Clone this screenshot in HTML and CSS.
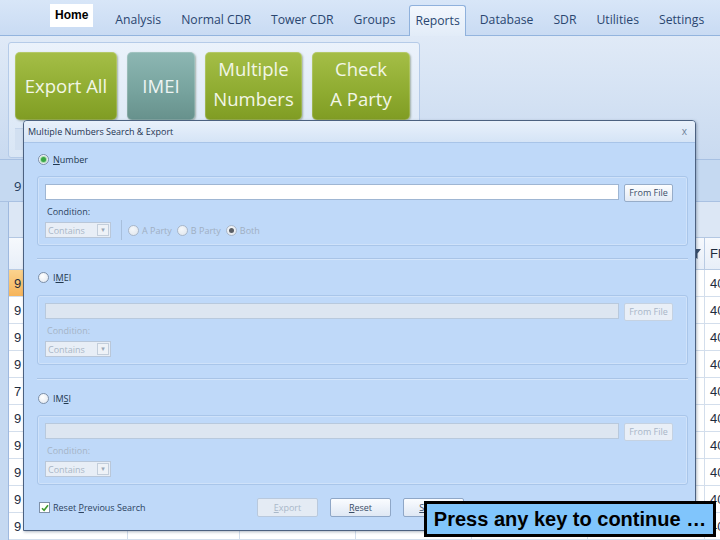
FILE: index.html
```html
<!DOCTYPE html>
<html>
<head>
<meta charset="utf-8">
<link rel="stylesheet" href="styles.css">
</head>
<body>
<div class="tabbar">
  <div class="tab home">Home</div>
  <div class="tab first">Analysis</div>
  <div class="tab">Normal CDR</div>
  <div class="tab">Tower CDR</div>
  <div class="tab">Groups</div>
  <div class="tab active">Reports</div>
  <div class="tab">Database</div>
  <div class="tab">SDR</div>
  <div class="tab">Utilities</div>
  <div class="tab">Settings</div>
</div>
<div class="ribbon">
  <div class="panel">
    <div class="bigrow">
      <div class="big green w1">Export All</div>
      <div class="big teal w2">IMEI</div>
      <div class="big green w3 two">Multiple<br>Numbers</div>
      <div class="big green w4 two">Check<br>A Party</div>
    </div>
    <div class="panel-foot"></div>
  </div>
</div>
<div class="infobar">9</div>
<div class="grid">
  <div class="band"></div>
  <div class="row head">
    <div class="cell"></div><div class="cell"></div><div class="cell"></div><div class="cell"></div><div class="cell"></div>
    <div class="cell filt"><svg width="9" height="10" viewBox="0 0 9 10"><path d="M0 0H9L5.5 4.5V10L3.5 8.5V4.5Z" fill="#3b4f6c"/></svg></div>
    <div class="cell">Fl</div>
  </div>
  <div class="row"><div class="cell sel">9</div><div class="cell"></div><div class="cell"></div><div class="cell"></div><div class="cell"></div><div class="cell"></div><div class="cell">40</div></div>
  <div class="row"><div class="cell">9</div><div class="cell"></div><div class="cell"></div><div class="cell"></div><div class="cell"></div><div class="cell"></div><div class="cell">40</div></div>
  <div class="row"><div class="cell">9</div><div class="cell"></div><div class="cell"></div><div class="cell"></div><div class="cell"></div><div class="cell"></div><div class="cell">40</div></div>
  <div class="row"><div class="cell">9</div><div class="cell"></div><div class="cell"></div><div class="cell"></div><div class="cell"></div><div class="cell"></div><div class="cell">40</div></div>
  <div class="row"><div class="cell">7</div><div class="cell"></div><div class="cell"></div><div class="cell"></div><div class="cell"></div><div class="cell"></div><div class="cell">40</div></div>
  <div class="row"><div class="cell">9</div><div class="cell"></div><div class="cell"></div><div class="cell"></div><div class="cell"></div><div class="cell"></div><div class="cell">40</div></div>
  <div class="row"><div class="cell">9</div><div class="cell"></div><div class="cell"></div><div class="cell"></div><div class="cell"></div><div class="cell"></div><div class="cell">40</div></div>
  <div class="row"><div class="cell">9</div><div class="cell"></div><div class="cell"></div><div class="cell"></div><div class="cell"></div><div class="cell"></div><div class="cell">40</div></div>
  <div class="row"><div class="cell">9</div><div class="cell"></div><div class="cell"></div><div class="cell"></div><div class="cell"></div><div class="cell"></div><div class="cell">40</div></div>
  <div class="row"><div class="cell">9</div><div class="cell"></div><div class="cell"></div><div class="cell"></div><div class="cell"></div><div class="cell"></div><div class="cell">40</div></div>
  <div class="row"><div class="cell">9</div><div class="cell"></div><div class="cell"></div><div class="cell"></div><div class="cell"></div><div class="cell"></div><div class="cell">40</div></div>
</div>

<div class="dialog">
  <div class="dtitle"><span>Multiple Numbers Search &amp; Export</span><span class="close">x</span></div>
  <div class="dbody">
    <div class="opt"><span class="radio on"></span><span class="lbl"><u>N</u>umber</span></div>
    <div class="group g1">
      <div class="inrow"><div class="input"></div><div class="fbtn">From File</div></div>
      <div class="cond">Condition:</div>
      <div class="crow">
        <div class="combo"><span>Contains</span><span class="drop">&#9662;</span></div>
        <div class="vsep"></div>
        <span class="radio dis"></span><span class="rl">A Party</span>
        <span class="radio dis"></span><span class="rl">B Party</span>
        <span class="radio dis chk"></span><span class="rl">Both</span>
      </div>
    </div>
    <div class="sep s1"></div>
    <div class="opt o2"><span class="radio"></span><span class="lbl">I<u>M</u>EI</span></div>
    <div class="group g2 off">
      <div class="inrow"><div class="input"></div><div class="fbtn">From File</div></div>
      <div class="cond">Condition:</div>
      <div class="crow"><div class="combo"><span>Contains</span><span class="drop">&#9662;</span></div></div>
    </div>
    <div class="sep s2"></div>
    <div class="opt o3"><span class="radio"></span><span class="lbl">IM<u>S</u>I</span></div>
    <div class="group g3 off">
      <div class="inrow"><div class="input"></div><div class="fbtn">From File</div></div>
      <div class="cond">Condition:</div>
      <div class="crow"><div class="combo"><span>Contains</span><span class="drop">&#9662;</span></div></div>
    </div>
    <div class="bottom">
      <div class="chkwrap">
        <span class="checkbox"><svg width="8" height="8" viewBox="0 0 8 8"><path d="M1 4.2L3.1 6.3L7 1.3" fill="none" stroke="#3f9a2f" stroke-width="1.6"/></svg></span>
        <span class="lbl">Reset <u>P</u>revious Search</span>
      </div>
      <div class="btn dis"><u>E</u>xport</div>
      <div class="btn"><u>R</u>eset</div>
      <div class="btn"><u>S</u>earch</div>
    </div>
  </div>
</div>

<div class="press">Press any key to continue …</div>
</body>
</html>
```
FILE: styles.css
```css
* { box-sizing: border-box; }
html, body { margin: 0; padding: 0; }
body {
  width: 720px;
  height: 540px;
  overflow: hidden;
  position: relative;
  font-family: "Open Sans", "DejaVu Sans", sans-serif;
  background: #c5d9f1;
}

/* tabs */
.tabbar {
  height: 36px;
  display: flex;
  align-items: flex-start;
  padding-left: 50px;
  background: linear-gradient(#d8e6f8, #c9dbf3);
  border-bottom: 1px solid #93b4de;
}
.tab {
  margin-top: 5px;
  height: 30px;
  line-height: 30px;
  padding: 0 10px;
  font-size: 12.2px;
  color: #2a4670;
  white-space: nowrap;
}
.tab.home {
  margin-top: 4px;
  height: 23px;
  line-height: 23px;
  padding: 0 5px;
  background: #fff;
  color: #000;
  font-family: "Liberation Sans", Arial, sans-serif;
  font-weight: bold;
  font-size: 12px;
}
.tab.first { margin-left: 12px; }
.tab.active {
  margin: 5px 4px 0 4px;
  padding: 0 5px;
  height: 31px;
  line-height: 29px;
  border: 1px solid #8fb1dc;
  border-bottom: none;
  border-radius: 3px 3px 0 0;
  background: linear-gradient(#f3f7fd, #e2ecf8);
}

/* ribbon */
.ribbon {
  height: 124px;
  background: linear-gradient(#e0eaf7, #d3e1f3 55%, #c9daf0);
  border-bottom: 1px solid #a7c0e2;
  padding: 6px 0 0 8px;
}
.panel {
  width: 412px;
  height: 116px;
  border: 1px solid #b5cbe8;
  border-radius: 3px;
  background: linear-gradient(#ebf2fb, #d9e6f5);
  padding: 9px 0 0 6px;
}
.bigrow { display: flex; gap: 10px; }
.big {
  height: 68px;
  border-radius: 5px;
  display: flex;
  align-items: center;
  justify-content: center;
  text-align: center;
  font-size: 18.5px;
  line-height: 30px;
  color: #f2f6e6;
  box-shadow: 1px 1px 2px rgba(40, 60, 20, 0.35), inset 0 0 0 1px rgba(255,255,255,0.18);
}
.big.two { padding-bottom: 4px; }
.green { background: linear-gradient(#a5be47, #8eab30 60%, #809c23); }
.teal { background: linear-gradient(#8db7b3, #76a29d 60%, #67918c); color: #eef4f3; }
.w1 { width: 102px; }
.w2 { width: 68px; }
.w3 { width: 97px; }
.w4 { width: 98px; }
.panel-foot {
  margin-top: 8px;
  height: 22px;
  background: #d2e0f1;
  border-top: 1px solid #c3d4ea;
}

.infobar {
  height: 42px;
  padding: 17px 0 0 14px;
  font-size: 13px;
  line-height: 18px;
  color: #1e395b;
  border-bottom: 1px solid #a9c1e2;
}

/* grid */
.grid {
  margin-left: 8px;
  border-left: 1px solid #9fb9de;
  background: #fff;
  font-family: "Liberation Sans", Arial, sans-serif;
  font-size: 13px;
  color: #1e2c3e;
}
.band { height: 36px; background: #dce7f5; border-bottom: 1px solid #b3c7e2; }
.row {
  display: grid;
  grid-template-columns: 119px 112px 116px 116px 116px 117px 60px;
  height: 27px;
}
.row.head { height: 32px; background: linear-gradient(#f6f9fd, #e7eef8); }
.cell {
  border-right: 1px solid #d3deec;
  border-bottom: 1px solid #d3deec;
  padding-left: 5px;
  line-height: 28px;
  white-space: nowrap;
  overflow: hidden;
}
.row.head .cell { border-color: #b9cbe3; line-height: 31px; }
.cell.filt { display: flex; justify-content: flex-end; align-items: center; padding-right: 3px; }
.cell.sel { background: linear-gradient(#fbd38e, #f6b45a); }

/* dialog */
.dialog {
  position: absolute;
  left: 23px;
  top: 120px;
  width: 673px;
  height: 411px;
  border: 1px solid #4c6180;
  border-radius: 4px 4px 0 0;
  background: #bfd9f9;
  box-shadow: 1px 1px 3px rgba(30, 50, 80, 0.35);
  font-size: 9px;
  color: #22384f;
}
.dtitle {
  height: 22px;
  line-height: 21px;
  padding: 0 8px 0 4px;
  display: flex;
  justify-content: space-between;
  background: linear-gradient(#e9f1fb, #d5e4f6);
  border-bottom: 1px solid #a8c4e8;
  border-radius: 3px 3px 0 0;
  color: #1f3552;
}
.close { color: #6f829b; font-size: 10px; }
.dbody { padding: 10px 7px 0 13px; }
.opt { display: flex; align-items: center; height: 12px; padding-left: 1px; }
.opt .lbl { margin-left: 4px; }
.o2 { margin-top: 12px; }
.o3 { margin-top: 13px; }
.radio {
  display: inline-block;
  width: 11px;
  height: 11px;
  flex: none;
  border-radius: 50%;
  border: 1px solid #7e90a8;
  background: radial-gradient(circle at 40% 35%, #ffffff, #dfe6ef);
  position: relative;
}
.radio.on::after {
  content: "";
  position: absolute;
  left: 2px; top: 2px;
  width: 5px; height: 5px;
  border-radius: 50%;
  background: #3aa646;
  box-shadow: 0 0 0 1px #a8dcae;
}
.radio.dis { border-color: #a9b7c9; background: radial-gradient(circle at 40% 35%, #f4f7fa, #dfe5ec); }
.radio.chk::after {
  content: "";
  position: absolute;
  left: 2px; top: 2px;
  width: 5px; height: 5px;
  border-radius: 50%;
  background: #5a5f66;
}

.group {
  height: 70px;
  margin-top: 11px;
  border: 1px solid #a9c6ea;
  border-radius: 3px;
  box-shadow: inset 0 0 0 1px #cfe2fa;
  padding: 7px 14px 7px 7px;
}
.g2 { margin-top: 12px; }
.inrow { display: flex; gap: 5px; height: 18px; }
.input {
  flex: 1;
  height: 16px;
  background: #fff;
  border: 1px solid #9fb6d3;
}
.fbtn {
  width: 49px;
  height: 18px;
  border: 1px solid #97adc9;
  border-radius: 2px;
  background: linear-gradient(#fdfeff, #e2eaf5);
  text-align: center;
  line-height: 16px;
  color: #3a4e69;
}
.cond { margin-top: 4px; height: 12px; line-height: 12px; padding-left: 2px; color: #2c4361; }
.crow { margin-top: 4px; display: flex; align-items: center; height: 16px; }
.combo {
  width: 66px;
  height: 16px;
  border: 1px solid #b9c7d9;
  background: #e8eef6;
  color: #a9b6c6;
  display: flex;
  justify-content: space-between;
  align-items: center;
  padding: 0 1px 0 2px;
}
.drop {
  width: 12px;
  height: 12px;
  border: 1px solid #c3cedb;
  background: #eef2f7;
  font-size: 7px;
  line-height: 10px;
  text-align: center;
  color: #9aa8b8;
}
.vsep { width: 1px; height: 20px; background: #a7bfdc; margin: 0 6px 0 10px; }
.rl { color: #9fafc2; margin: 0 5px 0 3px; }

.off .input { background: #dde6f1; border-color: #b8c9dd; }
.off .fbtn { background: #e9eff7; border-color: #c5d2e2; color: #a8b6c7; }
.off .cond { color: #a5b4c6; }

.sep { height: 1px; background: #a9c4e6; box-shadow: 0 1px 0 #d5e6fb; }
.s1 { margin-top: 12px; }
.s2 { margin-top: 13px; }

.bottom { margin-top: 13px; display: flex; align-items: center; height: 19px; }
.chkwrap { width: 220px; display: flex; align-items: center; padding-left: 2px; }
.checkbox {
  width: 11px; height: 11px;
  border: 1px solid #7e90a8;
  background: #fff;
  display: flex;
  align-items: center;
  justify-content: center;
}
.chkwrap .lbl { margin-left: 3px; color: #2c4361; }
.btn {
  width: 61px;
  height: 19px;
  margin-right: 12px;
  border: 1px solid #8fa7c7;
  border-radius: 2px;
  background: linear-gradient(#fafcff, #dfe8f4);
  text-align: center;
  line-height: 17px;
  color: #394d67;
}
.btn.dis { background: #e4ebf4; border-color: #b9c9dd; color: #a9b8c9; }

.press {
  position: absolute;
  left: 424px;
  top: 501px;
  width: 292px;
  height: 36px;
  border: 3px solid #000;
  background: #80c5fc;
  font-family: "Liberation Sans", Arial, sans-serif;
  font-weight: bold;
  font-size: 20px;
  line-height: 30px;
  text-align: center;
  color: #000;
  white-space: nowrap;
}
```
